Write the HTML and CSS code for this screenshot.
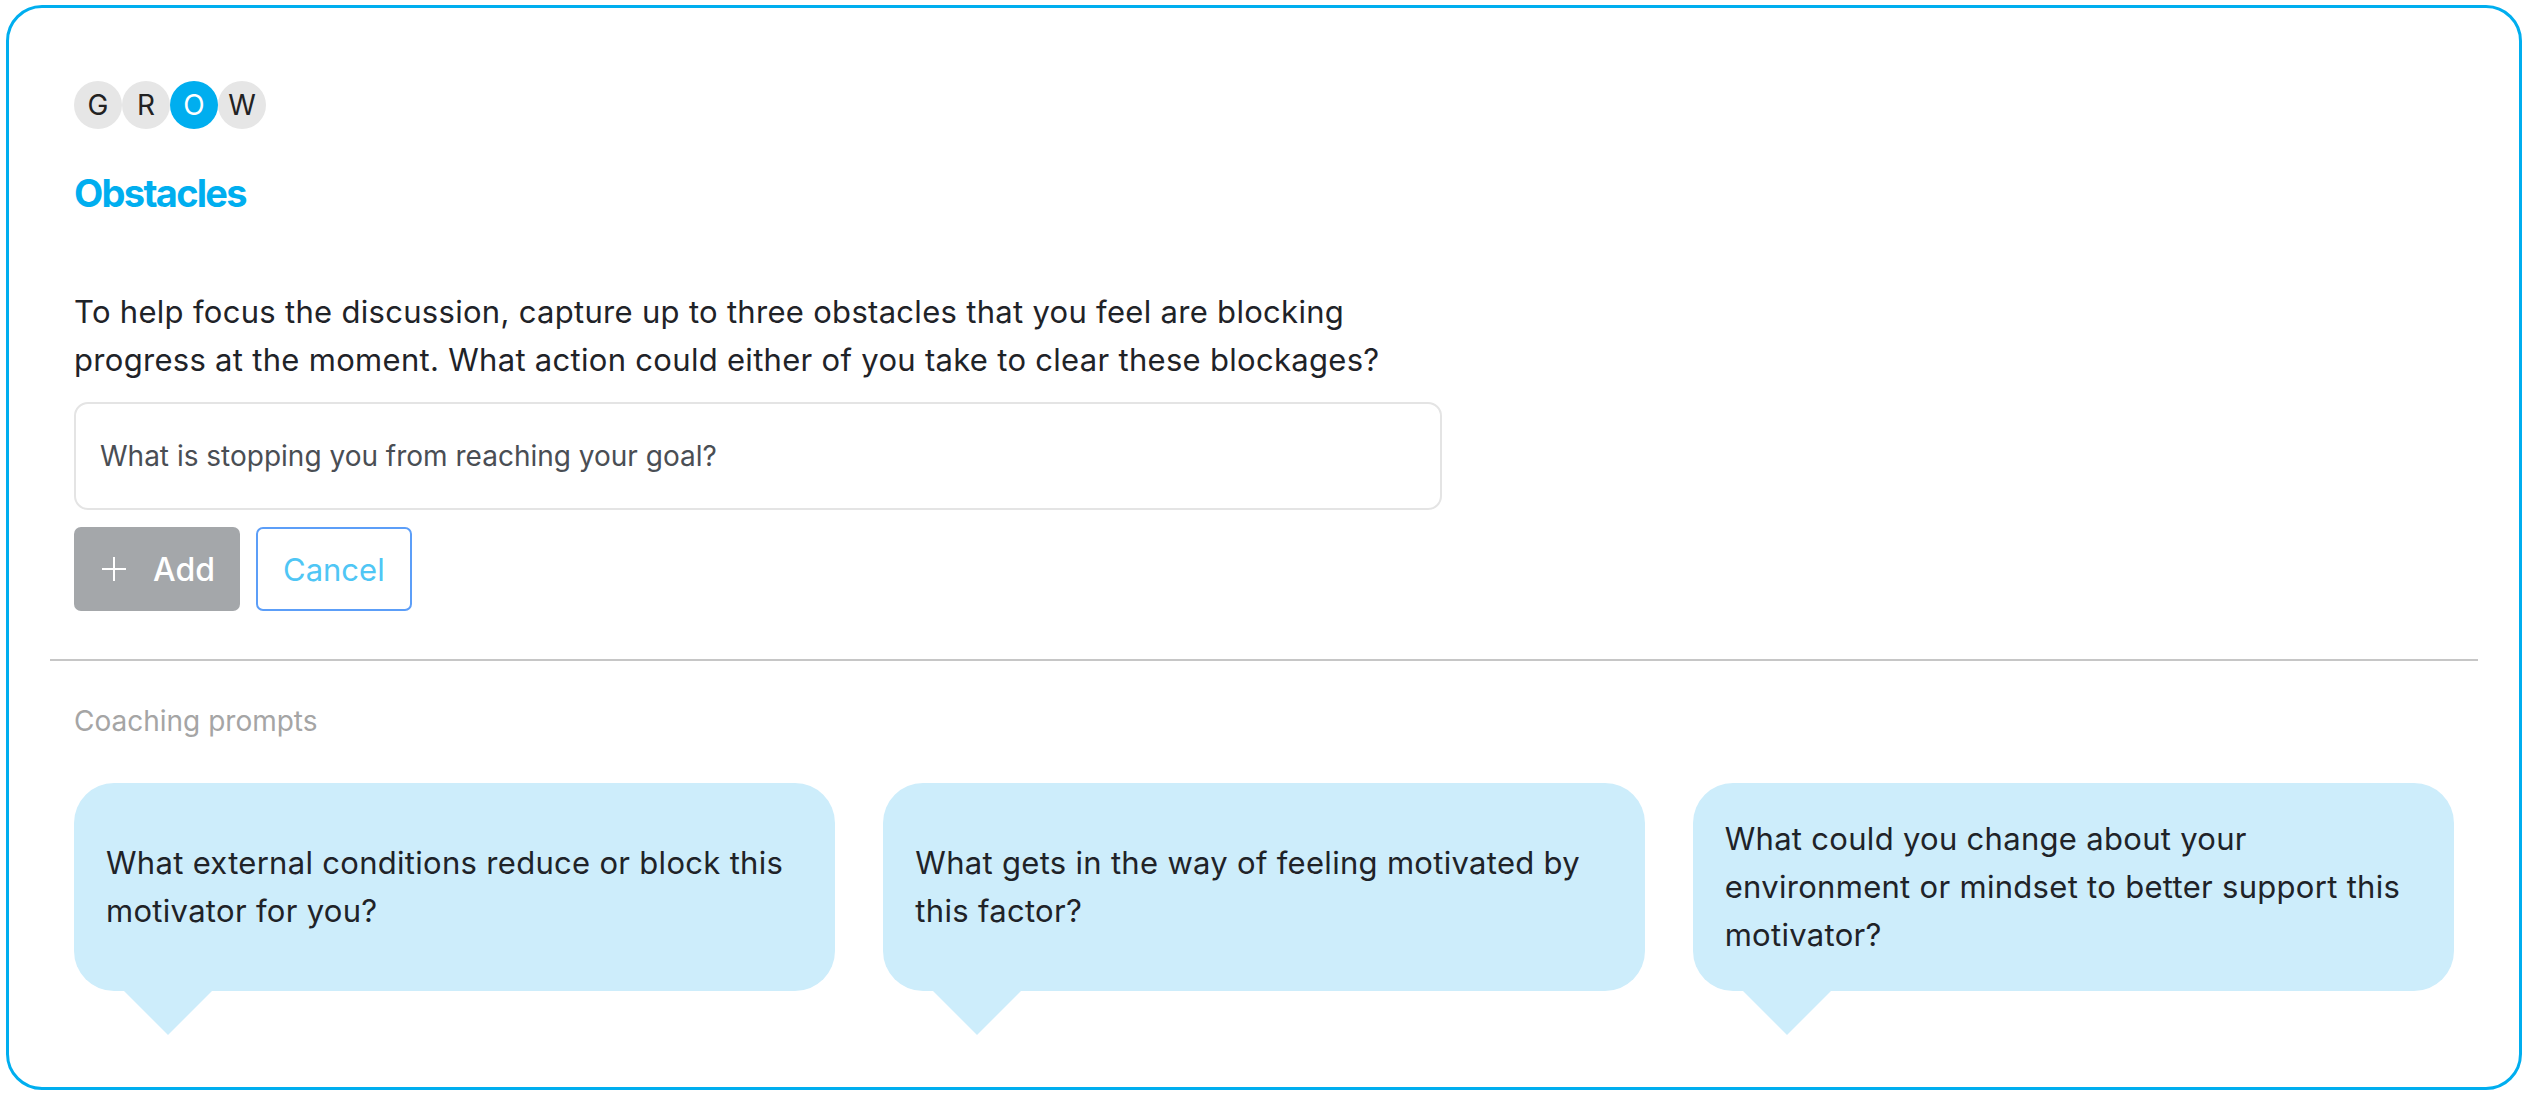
FILE: index.html
```html
<!DOCTYPE html>
<html lang="en">
<head>
<meta charset="utf-8">
<title>Obstacles</title>
<link rel="stylesheet" href="styles.css">
</head>
<body>
<div class="card">
  <div class="steps">
    <span class="step">G</span>
    <span class="step">R</span>
    <span class="step active">O</span>
    <span class="step">W</span>
  </div>
  <h1 class="title">Obstacles</h1>
  <div class="form">
    <p class="intro">To help focus the discussion, capture up to three obstacles that you feel are blocking progress at the moment. What action could either of you take to clear these blockages?</p>
    <div class="input">What is stopping you from reaching your goal?</div>
    <div class="actions">
      <button class="btn btn-add"><svg class="plus" width="26" height="26" viewBox="0 0 26 26"><path d="M13 1v24M1 13h24" stroke="#fff" stroke-width="2" fill="none"/></svg><span>Add</span></button>
      <button class="btn btn-cancel">Cancel</button>
    </div>
  </div>
  <hr class="divider">
  <div class="prompts-label">Coaching prompts</div>
  <div class="prompts">
    <div class="bubble"><p>What external conditions reduce or block this motivator for you?</p></div>
    <div class="bubble"><p>What gets in the way of feeling motivated by this factor?</p></div>
    <div class="bubble"><p>What could you change about your environment or mindset to better support this motivator?</p></div>
  </div>
</div>
</body>
</html>
```
FILE: styles.css
```css
* { box-sizing: border-box; }
html, body { margin: 0; padding: 0; background: #fff; }
body {
  font-family: Inter, "Noto Sans", "Liberation Sans", sans-serif;
  color: #1f2328;
}
.card {
  margin: 5px 6px 0 6px;
  border: 3px solid #00aeef;
  border-radius: 36px;
  padding: 73px 65px 96px 65px;
  background: #fff;
}
.steps { display: flex; }
.step {
  width: 48px;
  height: 48px;
  border-radius: 50%;
  background: #e6e6e6;
  color: #222;
  font-size: 28px;
  display: flex;
  align-items: center;
  justify-content: center;
}
.step.active { background: #00aeef; color: #fff; }
.title {
  margin: 41px 0 0 0;
  font-size: 38px;
  line-height: 46px;
  font-weight: 700;
  letter-spacing: -0.045em;
  color: #00aeef;
}
.form { max-width: 1368px; }
.intro {
  margin: 72px 0 0 0;
  font-size: 31px;
  letter-spacing: 0.3px;
  line-height: 48px;
  color: #1f2328;
}
.input {
  margin-top: 18px;
  height: 108px;
  border: 2px solid #e4e4e4;
  border-radius: 14px;
  padding: 0 24px;
  display: flex;
  align-items: center;
  font-size: 28px;
  color: #4a4e54;
}
.actions { margin-top: 17px; display: flex; gap: 16px; }
.btn {
  height: 84px;
  border-radius: 7px;
  font-family: inherit;
  font-size: 32px;
  display: flex;
  align-items: center;
  cursor: pointer;
}
.btn-add {
  width: 166px;
  padding: 0 27px;
  gap: 26px;
  background: #a4a7aa;
  border: none;
  color: #fff;
  font-weight: 500;
}
.plus { flex: none; }
.btn-cancel {
  width: 156px;
  padding: 0 25px;
  background: #fff;
  border: 2px solid #5c9ef8;
  color: #4fc6f5;
  font-size: 31px;
}
.divider {
  margin: 48px -24px 0 -24px;
  border: none;
  height: 2px;
  background: #c6c6c6;
}
.prompts-label {
  margin-top: 40px;
  font-size: 28px;
  line-height: 40px;
  color: #a5a5a5;
}
.prompts {
  margin-top: 42px;
  display: grid;
  grid-template-columns: repeat(3, 1fr);
  gap: 48px;
}
.bubble {
  position: relative;
  background: #cdedfb;
  border-radius: 40px;
  padding: 32px;
  display: flex;
  align-items: center;
}
.bubble p {
  margin: 0;
  font-size: 31px;
  letter-spacing: 0.3px;
  line-height: 48px;
  color: #1f2328;
}
.bubble::after {
  content: "";
  position: absolute;
  left: 50px;
  top: 100%;
  width: 0;
  height: 0;
  border-left: 44px solid transparent;
  border-right: 44px solid transparent;
  border-top: 44px solid #cdedfb;
}
```
